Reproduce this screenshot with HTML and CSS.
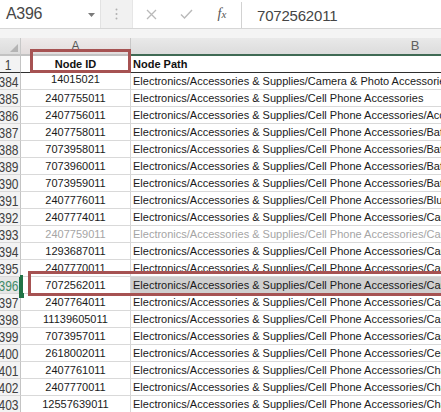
FILE: index.html
```html
<!DOCTYPE html>
<html>
<head>
<meta charset="utf-8">
<link rel="stylesheet" href="styles.css">
</head>
<body>
<div class="fbar">
  <div class="namebox">
    <span class="name">A396</span>
    <svg class="dd" width="7" height="4" viewBox="0 0 7 4"><path d="M0 0H7L3.5 4Z" fill="#7a7a7a"/></svg>
  </div>
  <div class="grip">
    <svg width="3" height="12" viewBox="0 0 3 12"><circle cx="1.5" cy="1.5" r="1" fill="#b0b0b0"/><circle cx="1.5" cy="6" r="1" fill="#b0b0b0"/><circle cx="1.5" cy="10.5" r="1" fill="#b0b0b0"/></svg>
  </div>
  <div class="btn b1"><svg width="11" height="11" viewBox="0 0 11 11"><path d="M1 1L10 10M10 1L1 10" stroke="#b9b9b9" stroke-width="1.3" fill="none"/></svg></div>
  <div class="btn b2"><svg width="13" height="10" viewBox="0 0 13 10"><path d="M1 5.5L4.5 9L12 1" stroke="#b9b9b9" stroke-width="1.4" fill="none"/></svg></div>
  <div class="btn b3"><span class="fx">f<small>x</small></span></div>
  <div class="val">7072562011</div>
</div>
<div class="gap"></div>
<div class="sheet">
  <div class="grid">
    <div class="row hrow">
      <div class="rh corner"><svg width="8" height="8" viewBox="0 0 8 8"><path d="M8 0V8H0Z" fill="#b4b4b4"/></svg></div>
      <div class="ca hA">A</div>
      <div class="cb hB">B</div>
    </div>
    <div class="row r1">
      <div class="rh"><span>1</span></div>
      <div class="ca"><b>Node ID</b></div>
      <div class="cb"><b>Node Path</b></div>
    </div>
    <div class="row"><div class="rh"><span>384</span></div><div class="ca clipt">14015021</div><div class="cb">Electronics/Accessories &amp; Supplies/Camera &amp; Photo Accessories</div></div>
    <div class="row"><div class="rh"><span>385</span></div><div class="ca">2407755011</div><div class="cb">Electronics/Accessories &amp; Supplies/Cell Phone Accessories</div></div>
    <div class="row"><div class="rh"><span>386</span></div><div class="ca">2407756011</div><div class="cb">Electronics/Accessories &amp; Supplies/Cell Phone Accessories/Accessory Kits</div></div>
    <div class="row"><div class="rh"><span>387</span></div><div class="ca">2407758011</div><div class="cb">Electronics/Accessories &amp; Supplies/Cell Phone Accessories/Batteries</div></div>
    <div class="row"><div class="rh"><span>388</span></div><div class="ca">7073958011</div><div class="cb">Electronics/Accessories &amp; Supplies/Cell Phone Accessories/Batteries/Batteries</div></div>
    <div class="row"><div class="rh"><span>389</span></div><div class="ca">7073960011</div><div class="cb">Electronics/Accessories &amp; Supplies/Cell Phone Accessories/Batteries/Battery Packs</div></div>
    <div class="row"><div class="rh"><span>390</span></div><div class="ca">7073959011</div><div class="cb">Electronics/Accessories &amp; Supplies/Cell Phone Accessories/Batteries/Battery Cases</div></div>
    <div class="row"><div class="rh"><span>391</span></div><div class="ca">2407776011</div><div class="cb">Electronics/Accessories &amp; Supplies/Cell Phone Accessories/Bluetooth Headsets</div></div>
    <div class="row"><div class="rh"><span>392</span></div><div class="ca">2407774011</div><div class="cb">Electronics/Accessories &amp; Supplies/Cell Phone Accessories/Car Accessories</div></div>
    <div class="row faded"><div class="rh"><span>393</span></div><div class="ca">2407759011</div><div class="cb">Electronics/Accessories &amp; Supplies/Cell Phone Accessories/Car Accessories/Chargers</div></div>
    <div class="row"><div class="rh"><span>394</span></div><div class="ca">1293687011</div><div class="cb">Electronics/Accessories &amp; Supplies/Cell Phone Accessories/Car Accessories/Cradles</div></div>
    <div class="row"><div class="rh"><span>395</span></div><div class="ca">2407770011</div><div class="cb">Electronics/Accessories &amp; Supplies/Cell Phone Accessories/Car Accessories/Kits</div></div>
    <div class="row sel"><div class="rh"><span>396</span></div><div class="ca">7072562011</div><div class="cb">Electronics/Accessories &amp; Supplies/Cell Phone Accessories/Car Accessories/Mounts</div></div>
    <div class="row"><div class="rh"><span>397</span></div><div class="ca">2407764011</div><div class="cb">Electronics/Accessories &amp; Supplies/Cell Phone Accessories/Cases</div></div>
    <div class="row"><div class="rh"><span>398</span></div><div class="ca">11139605011</div><div class="cb">Electronics/Accessories &amp; Supplies/Cell Phone Accessories/Cases/Basic Cases</div></div>
    <div class="row"><div class="rh"><span>399</span></div><div class="ca">7073957011</div><div class="cb">Electronics/Accessories &amp; Supplies/Cell Phone Accessories/Cases/Holsters</div></div>
    <div class="row"><div class="rh"><span>400</span></div><div class="ca">2618002011</div><div class="cb">Electronics/Accessories &amp; Supplies/Cell Phone Accessories/Cell Phone Charms</div></div>
    <div class="row"><div class="rh"><span>401</span></div><div class="ca">2407761011</div><div class="cb">Electronics/Accessories &amp; Supplies/Cell Phone Accessories/Chargers</div></div>
    <div class="row"><div class="rh"><span>402</span></div><div class="ca">2407770011</div><div class="cb">Electronics/Accessories &amp; Supplies/Cell Phone Accessories/Chargers/Car</div></div>
    <div class="row"><div class="rh"><span>403</span></div><div class="ca">12557639011</div><div class="cb">Electronics/Accessories &amp; Supplies/Cell Phone Accessories/Chargers/Wall</div></div>
  </div>
  <div class="selbox"></div>
  <div class="handle"></div>
  <div class="mark m1"></div>
  <div class="mark m2"></div>
</div>
</body>
</html>
```
FILE: styles.css
```css
html, body {
  margin: 0;
  padding: 0;
}
body {
  width: 441px;
  height: 412px;
  overflow: hidden;
  background: #ffffff;
  font-family: "Liberation Sans", Arial, sans-serif;
  color: #1a1a1a;
}

/* formula bar */
.fbar {
  display: flex;
  height: 28px;
  border-bottom: 1px solid #d6d6d6;
  background: #ffffff;
}
.namebox {
  width: 101px;
  flex: none;
  box-sizing: border-box;
  display: flex;
  align-items: center;
  justify-content: space-between;
  padding: 0 5px 0 6px;
  border-right: 1px solid #e2e2e2;
}
.name {
  font-size: 16px;
  color: #474747;
  letter-spacing: -0.3px;
}
.dd {
  margin-top: 1px;
}
.grip {
  width: 32px;
  flex: none;
  box-sizing: border-box;
  background: #f1f1f1;
  border-right: 1px solid #e6e6e6;
  display: flex;
  align-items: center;
  justify-content: center;
}
.btn {
  flex: none;
  display: flex;
  align-items: center;
  justify-content: center;
}
.b1 { width: 36px; }
.b2 { width: 34px; }
.b3 { width: 38px; }
.fx {
  font-family: "Liberation Serif", "Times New Roman", serif;
  font-style: italic;
  font-size: 14px;
  color: #555555;
}
.fx small {
  font-size: 11px;
}
.val {
  flex: 1;
  border-left: 1px solid #d2d2d2;
  margin: 2px 0 0 0;
  padding-left: 15px;
  font-size: 15px;
  color: #454545;
  display: flex;
  align-items: center;
  letter-spacing: -0.2px;
}

.gap {
  height: 9px;
  background: #f4f4f4;
}

/* sheet */
.sheet {
  position: relative;
  height: 374px;
  overflow: hidden;
}
.grid {
  margin-left: -4px;
}
.row {
  display: flex;
  height: 17px;
}
.rh, .ca, .cb {
  box-sizing: border-box;
  height: 17px;
  flex: none;
  border-bottom: 1px solid #d9d9d9;
}
.rh {
  width: 25px;
  background: #f3f3f3;
  border-right: 1px solid #c4c4c4;
  text-align: center;
  color: #404040;
  font-size: 15px;
  line-height: 17px;
  overflow: hidden;
}
.rh span {
  display: inline-block;
  transform: scaleX(0.8);
}
.ca {
  width: 110px;
  border-right: 1px solid #d6d6d6;
  text-align: center;
  font-size: 11px;
  line-height: 16px;
  white-space: nowrap;
}
.cb {
  width: 568px;
  padding-left: 2px;
  font-size: 11px;
  line-height: 16px;
  white-space: nowrap;
  overflow: hidden;
}
.clipt {
  line-height: 12px;
}

/* header row */
.hrow {
  height: 18px;
}
.hrow .rh, .hrow .ca, .hrow .cb {
  height: 18px;
  background: linear-gradient(#e9e9e9, #dcdcdc);
  color: #555555;
  font-size: 12px;
  line-height: 16px;
  text-align: center;
  border-bottom: 2px solid #c2c2c2;
}
.hrow .rh {
  display: flex;
  align-items: flex-end;
  justify-content: flex-end;
  padding: 0 2px 2px 0;
  border-right: 1px solid #c8c8c8;
}
.hrow .ca {
  background: linear-gradient(#eeeaea, #e2dcdc);
  border-right: 1px solid #c8c8c8;
}
.hrow .cb {
  border-bottom: 2px solid #3f6a54;
  font-size: 13px;
  color: #606060;
  padding-left: 0;
}

/* frozen row 1 */
.r1 .rh, .r1 .ca, .r1 .cb {
  border-bottom: 1px solid #2f2f2f;
  background-color: #ffffff;
}
.r1 .rh {
  background: #f3f3f3;
}
.r1 .ca, .r1 .cb {
  font-size: 11px;
  color: #111111;
}

.faded .ca, .faded .cb {
  color: #a5a5a5;
}

.sel .rh {
  color: #3f8a66;
  background: #e6e6e6;
  border-right: 2px solid #217346;
}
.sel .cb {
  background: #cfcfcf;
}

/* overlays */
.selbox {
  position: absolute;
  left: 20px;
  top: 237px;
  width: 3px;
  height: 21px;
  background: #217346;
}
.handle {
  position: absolute;
  left: 19px;
  top: 255px;
  width: 5px;
  height: 5px;
  background: #217346;
}
.mark {
  position: absolute;
  box-sizing: border-box;
  border: 3px solid #a65252;
}
.m1 {
  left: 30px;
  top: 11px;
  width: 101px;
  height: 24px;
}
.m2 {
  left: 28px;
  top: 233px;
  width: 440px;
  height: 25px;
}
```
